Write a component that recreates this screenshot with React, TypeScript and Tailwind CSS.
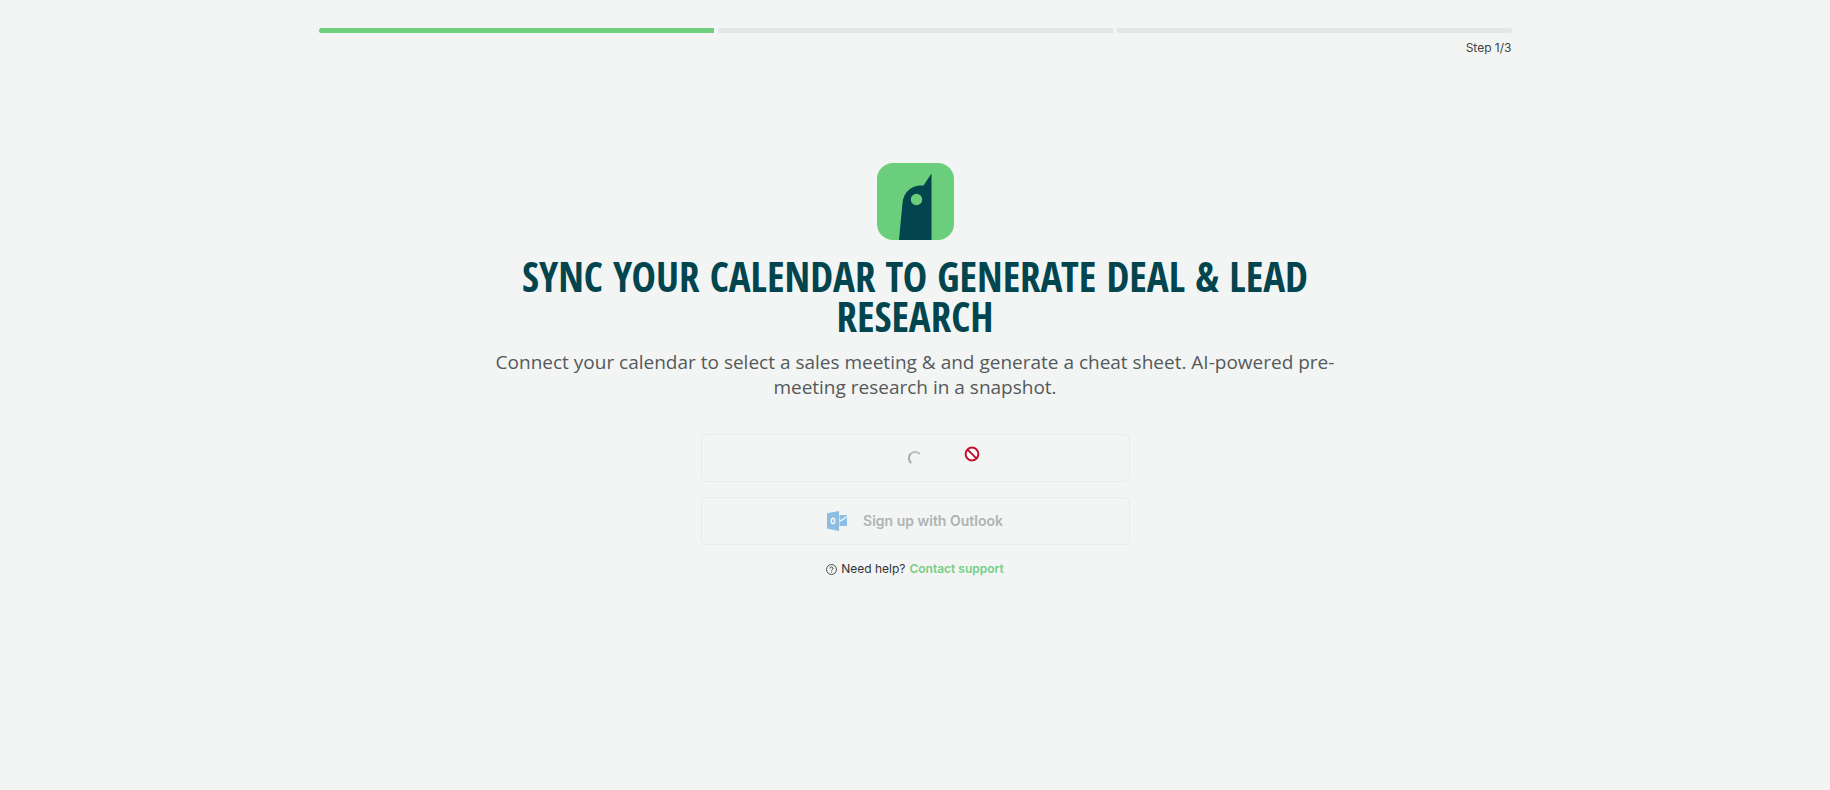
import React from "react";

const TOTAL_STEPS = 3;
const CURRENT_STEP = 1;

function StepProgress() {
  return (
    <header className="mx-auto w-full max-w-[1193px]">
      <div className="flex gap-1 overflow-hidden rounded-full">
        {Array.from({ length: TOTAL_STEPS }, (_, i) => (
          <div
            key={i}
            className={i < CURRENT_STEP ? "h-[5px] flex-1 bg-[#6fcf7f]" : "h-[5px] flex-1 bg-[#e4e7e6]"}
          />
        ))}
      </div>
      <p className="mt-1.5 text-right text-xs leading-[18px] text-[#3f4343]">
        Step {CURRENT_STEP}/{TOTAL_STEPS}
      </p>
    </header>
  );
}

function BirdLogo() {
  return (
    <svg viewBox="0 0 77 77" className="size-[77px]" role="img" aria-label="Logo">
      <rect width="77" height="77" rx="16" fill="#6ace7c" />
      <path d="M22 77 L25.5 40 C26.5 29 34 22.5 44 22.5 H46.5 L54.5 10.500 V77 Z" fill="#02454e" />
      <circle cx="39.500" cy="36.500" r="5.700" fill="#6ace7c" />
    </svg>
  );
}

function Spinner() {
  return (
    <svg viewBox="0 0 14 14" className="size-3.5" fill="none" aria-hidden="true">
      <path d="M3.300 12 A6 6 0 0 1 3 2.600" stroke="#a9adad" strokeWidth="2" />
      <path d="M3 2.600 A6 6 0 0 1 11.800 3.200" stroke="#bcc0c0" strokeWidth="2" />
    </svg>
  );
}

function BlockedCursor() {
  return (
    <svg viewBox="0 0 16 16" className="size-4" fill="none" aria-hidden="true">
      <circle cx="8" cy="8" r="7.700" fill="#fff" />
      <circle cx="8" cy="8" r="6.400" stroke="#c4102f" strokeWidth="2" />
      <path d="M3.600 3.600 L12.400 12.400" stroke="#c4102f" strokeWidth="2" />
    </svg>
  );
}

function OutlookIcon() {
  return (
    <svg viewBox="0 0 20 20" className="size-5" aria-hidden="true">
      <path d="M12.500 4 H19.200 Q20 4 20 4.800 V14.200 Q20 15 19.200 15 H12.500 Z" fill="#8dbde2" />
      <path d="M12 8.500 L13.800 9.800 L20 5.500" fill="none" stroke="#f2f5f4" strokeWidth="1.400" />
      <path d="M0 2.200 L12 0 V20 L0 17.500 Z" fill="#8dbde2" />
      <ellipse cx="6" cy="9.900" rx="1.700" ry="2.700" fill="none" stroke="#f2f5f4" strokeWidth="1.500" />
    </svg>
  );
}

function HelpIcon() {
  return (
    <svg viewBox="0 0 12 12" className="size-[11px]" fill="none" stroke="#3f4343" aria-hidden="true">
      <circle cx="6" cy="6" r="5.400" />
      <path d="M4.300 4.900 A1.700 1.500 0 1 1 6.600 6.200 Q6 6.500 6 7.200" />
      <path d="M6 8.300 V9.300" />
    </svg>
  );
}

const providerButton =
  "relative flex h-12 w-full items-center justify-center rounded-md border border-[#e8ebea] text-sm font-semibold text-[#b0b3b3]";

export default function App() {
  return (
    <div className="min-h-screen bg-[#f2f5f4] px-6 pt-7 font-['Inter',sans-serif]">
      <StepProgress />
      <main className="mx-auto mt-[106px] flex max-w-[860px] flex-col items-center text-center">
        <BirdLogo />
        <h1 className="mt-4 font-['Open_Sans_Condensed','Roboto_Condensed',sans-serif] text-[41px] leading-10 font-bold text-[#02454e]">
          SYNC YOUR CALENDAR TO GENERATE DEAL &amp; LEAD RESEARCH
        </h1>
        <p className="mt-3.5 font-['Open_Sans',sans-serif] text-[19px] leading-[25px] text-[#55595a]">
          Connect your calendar to select a sales meeting &amp; and generate a cheat sheet. AI-powered pre-meeting
          research in a snapshot.
        </p>
        <div className="mt-[34px] flex w-full max-w-[429px] flex-col gap-[15px]">
          <button type="button" disabled aria-label="Signing up" className={providerButton}>
            <Spinner />
            <span className="absolute top-[11px] left-[262px]">
              <BlockedCursor />
            </span>
          </button>
          <button type="button" disabled className={providerButton}>
            <span className="flex items-center gap-4">
              <OutlookIcon />
              Sign up with Outlook
            </span>
          </button>
        </div>
        <p className="mt-[15px] flex items-center gap-1 text-xs leading-[18px] text-[#303434]">
          <HelpIcon />
          Need help?
          <a href="#support" className="font-semibold text-[#74cf86]">
            Contact support
          </a>
        </p>
      </main>
    </div>
  );
}
